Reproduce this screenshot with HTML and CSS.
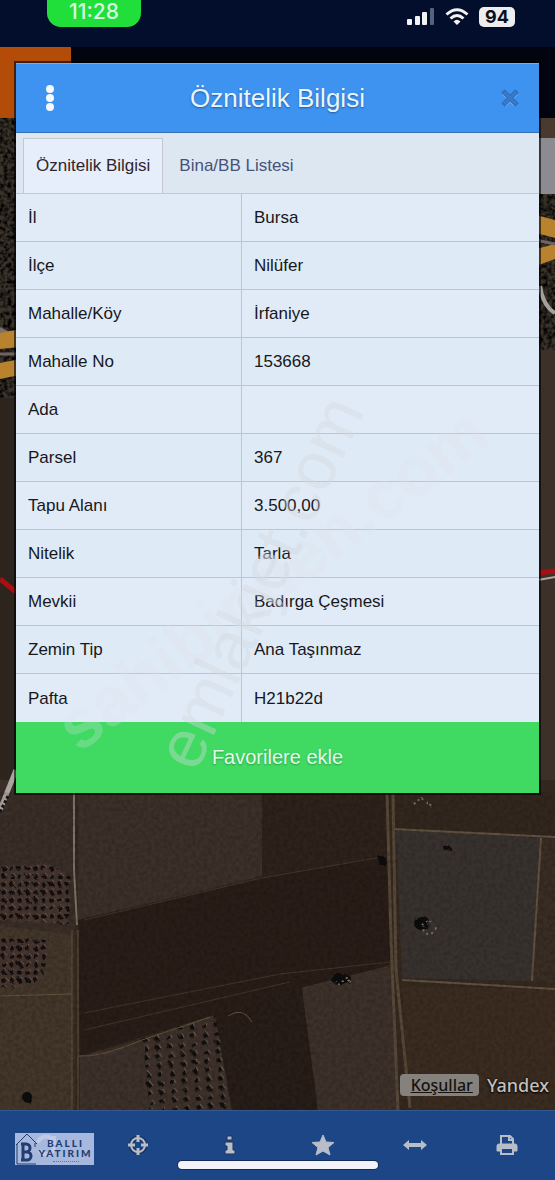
FILE: index.html
```html
<!DOCTYPE html>
<html lang="tr">
<head>
  <meta charset="UTF-8" />
  <meta name="viewport" content="width=device-width, initial-scale=1.0" />
  <title>Öznitelik Bilgisi</title>
  <link rel="stylesheet" href="styles.css">
</head>
<body>

  <header class="status-bar">
    <span class="clock">11:28</span>
    <div class="status-icons">
      <svg width="28" height="18" viewBox="0 0 28 18" fill="#f2f2f2">
        <rect x="0" y="11" width="5" height="6" rx="1" />
        <rect x="8" y="8" width="5" height="9" rx="1" />
        <rect x="15" y="4" width="5" height="13" rx="1" />
        <rect x="23" y="0" width="4" height="17" rx="1" fill="#56617a" />
      </svg>
      <svg width="24" height="18" viewBox="0 0 24 18" fill="none" stroke="#f2f2f2" stroke-width="3">
        <path d="M1.5 6.5Q12-3 22.500 6.500" />
        <path d="M5.500 10.500Q12 4.500 18.500 10.500" />
        <path d="M8.500 13.500Q12 10 15.500 13.500L12 17Z" fill="#f2f2f2" stroke="none" />
      </svg>
      <span class="battery">94</span>
    </div>
  </header>

  <div class="app-bar"><div class="app-logo"></div></div>

  <main class="map">
    <svg class="map-image" viewBox="0 118 555 992" preserveAspectRatio="xMidYMax slice">
      <defs>
        <filter id="grain" x="0" y="0" width="100%" height="100%">
          <feTurbulence type="fractalNoise" baseFrequency="0.25" numOctaves="3" seed="4" />
          <feColorMatrix values="0 0 0 0 0  0 0 0 0 0  0 0 0 0 0  2.500 0 0 0 -0.900" />
        </filter>
        <filter id="scatter">
          <feTurbulence type="fractalNoise" baseFrequency="0.15" numOctaves="2" seed="7" />
          <feDisplacementMap in="SourceGraphic" scale="6" />
        </filter>
        <pattern id="trees" width="8" height="8" patternUnits="userSpaceOnUse">
          <rect width="8" height="8" fill="#44362e" />
          <path d="M1 3L5 2L6 6L2 7Z" fill="#130f0e" />
          <path d="M5 1L7 3" stroke="#6a574c" />
        </pattern>
        <pattern id="grove" width="12" height="9" patternUnits="userSpaceOnUse" patternTransform="rotate(-5)">
          <path d="M3 3L7 2L8 6L4 7Z" fill="#0f0c0b" />
          <path d="M7 1L9 5" stroke="#75665a" />
        </pattern>
      </defs>
      <rect x="0" y="118" width="555" height="992" fill="#35291f" />

      <!-- motorway and road at the sides -->
      <rect x="0" y="118" width="555" height="280" fill="#3a332a" />
      <rect x="0" y="118" width="555" height="280" filter="url(#grain)" />
      <rect x="530" y="118" width="25" height="20" fill="#483a2e" />
      <rect x="530" y="138" width="25" height="56" fill="#8c8b91" />
      <path d="M0 327L20 337V345L0 343Z" fill="#7a7068" />
      <path d="M0 333L20 329V347L0 349ZM0 363L20 359V375L0 379Z" fill="#b9822e" />
      <path d="M0 354H20" stroke="#6f6462" stroke-width="3" />
      <path d="M536 215L555 220V238L536 233ZM536 249L555 244V259L536 266Z" fill="#b9822e" />
      <path d="M536 240L555 244" stroke="#6f6462" stroke-width="3" />
      <path d="M540 286Q543 306 555 313" stroke="#a5a19c" stroke-width="4" fill="none" />
      <rect x="0" y="398" width="20" height="400" fill="#2e241e" />
      <rect x="536" y="350" width="19" height="460" fill="#3c3129" />
      <path d="M0 579L16 592M538 573L555 571" stroke="#a80e12" stroke-width="5" />
      <path d="M538 580L555 577" stroke="#b1a5a0" stroke-width="2" />

      <!-- fields -->
      <path d="M0 780H75V1110H0Z" fill="#3a2e27" />
      <path d="M78 780H262V876L78 920Z" fill="#3c3029" />
      <path d="M262 780H390V856L262 878Z" fill="#2e221b" />
      <path d="M78 920L262 878L390 856V965L302 988L80 1056Z" fill="#291d17" />
      <path d="M80 1056L142 1040L150 1110H80Z" fill="#3d312a" />
      <path d="M142 1040L215 1015L232 1110H150Z" fill="#3e312a" />
      <path d="M215 1015L302 988L318 1110H232Z" fill="#281d17" />
      <path d="M302 988L392 967L398 1110H318Z" fill="#3d312a" />
      <path d="M393 780H555V836L393 829Z" fill="#32271e" />
      <path d="M396 829L541 838L532 981L402 978Z" fill="#38322f" />
      <path d="M541 838L555 839V984L532 981Z" fill="#392d24" />
      <path d="M402 986L555 990V1110H410Z" fill="#3b2c21" />
      <path d="M0 926L72 934V1110H0Z" fill="#43362a" />
      <g filter="url(#scatter)">
        <path d="M0 866L48 864L70 876L69 924L0 920Z" fill="url(#trees)" />
        <path d="M0 938L50 940L40 984L0 988Z" fill="url(#trees)" />
        <path d="M142 1040L215 1015L232 1110H150Z" fill="url(#grove)" />
      </g>

      <g fill="none" stroke="#62523f" stroke-width="1">
        <path d="M262 878L84 920M382 857L262 878M84 1013L280 974L390 962M84 1030L290 982M302 988L388 967" stroke="#44362c" />
        <path d="M78 1056Q100 1058 142 1040L210 1017M228 1016Q243 1006 252 1022" />
        <path d="M393 829L555 837M541 838L532 981M402 980L555 989" stroke-width="2" />
        <path d="M72 930V1110M78 930V1110M0 996L72 994" />
        <path d="M387 794L391 940L398 1110M393 794L396 970L410 1108" stroke="#574838" stroke-width="3" />
      </g>
      <path d="M74 793V870L77 925" stroke="#7d736a" stroke-width="2" fill="none" />
      <path d="M0 810L16 770" stroke="#aaa49e" stroke-width="5" />
      <path d="M0 812L8 796" stroke="#1b1715" stroke-width="3" stroke-dasharray="3 2" />
      <g filter="url(#scatter)">
        <g fill="#0c0909">
          <ellipse cx="422" cy="923" rx="8" ry="7" />
          <ellipse cx="341" cy="979" rx="10" ry="6" />
          <circle cx="382" cy="861" r="4" />
          <circle cx="447" cy="848" r="3" />
          <circle cx="27" cy="1097" r="5" />
        </g>
        <g fill="none" stroke="#807060" stroke-width="2" stroke-dasharray="2 3">
          <circle cx="429" cy="928" r="6" />
          <path d="M337 984L346 977L351 983M414 804L421 798L433 807" />
        </g>
      </g>
      <rect x="0" y="792" width="555" height="318" filter="url(#grain)" opacity="0.150" />
    </svg>

    <div class="map-copyright">
      <a href="#" class="terms">Koşullar</a>
      <span class="provider">Yandex</span>
    </div>
  </main>

  <section class="dialog" aria-labelledby="dialogTitle">
    <div class="dialog-header">
      <button class="menu-btn" aria-label="Menü">
        <svg width="10" height="26" viewBox="0 0 10 26" fill="#f4faff">
          <circle cx="5" cy="4" r="4" />
          <circle cx="5" cy="13" r="4" />
          <circle cx="5" cy="22" r="4" />
        </svg>
      </button>
      <h1 id="dialogTitle">Öznitelik Bilgisi</h1>
      <button class="close-btn" aria-label="Kapat">
        <svg width="20" height="20" viewBox="0 0 20 20" fill="none">
          <path d="M4 5L16 17M16 5L4 17" stroke="#75b3fb" stroke-width="5" />
          <path d="M3 3L17 17M17 3L3 17" stroke="#2d6fbd" stroke-width="5" />
          <path d="M4 4L16 16M16 4L4 16" stroke="#3879c8" stroke-width="3" />
        </svg>
      </button>
    </div>

    <div class="tabs">
      <button class="tab active">Öznitelik Bilgisi</button>
      <button class="tab">Bina/BB Listesi</button>
    </div>

    <table class="info-table">
      <tr><th scope="row">İl</th><td>Bursa</td></tr>
      <tr><th scope="row">İlçe</th><td>Nilüfer</td></tr>
      <tr><th scope="row">Mahalle/Köy</th><td>İrfaniye</td></tr>
      <tr><th scope="row">Mahalle No</th><td>153668</td></tr>
      <tr><th scope="row">Ada</th><td></td></tr>
      <tr><th scope="row">Parsel</th><td>367</td></tr>
      <tr><th scope="row">Tapu Alanı</th><td>3.500,00</td></tr>
      <tr><th scope="row">Nitelik</th><td>Tarla</td></tr>
      <tr><th scope="row">Mevkii</th><td>Badırga Çeşmesi</td></tr>
      <tr><th scope="row">Zemin Tip</th><td>Ana Taşınmaz</td></tr>
      <tr><th scope="row">Pafta</th><td>H21b22d</td></tr>
    </table>

    <button class="favorite-btn">Favorilere ekle</button>

    <svg class="watermark" viewBox="0 0 523 729">
      <text class="wm-sahibinden" transform="translate(63 690) rotate(-37)">sahibinden.com</text>
      <text class="wm-emlakjet" transform="translate(180 710) rotate(-65)">emlakjet.com</text>
    </svg>
  </section>

  <nav class="toolbar">
    <button aria-label="Yenile">
      <svg width="22" height="22" viewBox="0 0 22 22" fill="none" stroke="#b9bdc7" stroke-width="4">
        <path d="M3 9A8 8 0 0 1 18 7M19 2V9H12M19 13A8 8 0 0 1 4 16" />
      </svg>
    </button>
    <button aria-label="Konum">
      <svg width="22" height="22" viewBox="0 0 22 22" fill="none">
        <circle cx="11" cy="11" r="7" stroke="#183563" stroke-width="5" />
        <circle cx="11" cy="11" r="7" stroke="#b9bdc7" stroke-width="2" />
        <path d="M11 1V8M11 14V21M1 11H8M14 11H21" stroke="#b9bdc7" stroke-width="3" />
      </svg>
    </button>
    <button aria-label="Bilgi">
      <svg width="12" height="20" viewBox="0 0 12 20" fill="#b9bdc7" stroke="#183563">
        <path d="M3 1H8V5H3ZM1 7H9V15H11V19H1V15H3V11H1Z" />
      </svg>
    </button>
    <button aria-label="Favoriler">
      <svg width="24" height="22" viewBox="0 0 24 22" fill="#b9bdc7" stroke="#b9bdc7">
        <path d="M12 1L15 8L23 8.500L17 13.500L19 21L12 17L5 21L7 13.500L1 8.500L9 8Z" />
      </svg>
    </button>
    <button aria-label="Ölçüm">
      <svg width="24" height="12" viewBox="0 0 24 12" fill="#b9bdc7">
        <path d="M0 6L6 1V4H18V1L24 6L18 11V8H6V11Z" />
      </svg>
    </button>
    <button aria-label="Yazdır">
      <svg width="22" height="20" viewBox="0 0 22 20" fill="none" stroke="#b9bdc7" stroke-width="2">
        <path d="M5 9V1H14L17 4V9M13 1V5H17" />
        <path d="M1 16V11Q1 9 3 9H19Q21 9 21 11V16H17V13H5V16Z" fill="#b9bdc7" stroke-width="1" />
        <path d="M5 13V19H17V13Z" fill="#1d4686" />
      </svg>
    </button>
    <div class="agency-logo">
      <svg width="22" height="32" viewBox="0 0 22 32" fill="none" stroke="#233d70">
        <path d="M1 12L12 1L22 11M2 11V31H21M20 10V14" />
        <path d="M8 11V27H12A4 4 0 0 0 12 19H8M8 19H11A4 4 0 0 0 11 11H6M6 27H8" stroke-width="3" />
      </svg>
      <div class="agency-name">
        <span>BALLI</span>
        <span>YATIRIM</span>
        <i></i>
      </div>
    </div>
    <div class="home-indicator"></div>
  </nav>

</body>
</html>
```

FILE: styles.css
```css
* { box-sizing: border-box; }
body {
  font-family: "Liberation Sans", Arial, sans-serif;
  margin: 0;
  min-height: 100vh;
  display: flex;
  flex-direction: column;
  position: relative;
  background: #020611;
  color: #17171c;
}
button {
  font-family: inherit;
  border: none;
  background: none;
  padding: 0;
  cursor: pointer;
}
svg { display: block; }

.status-bar {
  height: 47px;
  display: flex;
  justify-content: space-between;
  align-items: flex-start;
  padding: 0 40px 0 47px;
  background: #020e2b;
}
.clock {
  width: 94px;
  height: 27px;
  border-radius: 0 0 14px 14px;
  background: #20df3b;
  color: #d8f8e0;
  font-family: Inter, sans-serif;
  font-size: 21px;
  font-weight: 500;
  line-height: 24px;
  text-align: center;
}
.status-icons {
  display: flex;
  align-items: center;
  gap: 10px;
  padding-top: 7px;
}
.battery {
  width: 36px;
  height: 20px;
  border-radius: 5px;
  background: #ededed;
  color: #0a0f1c;
  font-family: Inter, sans-serif;
  font-weight: bold;
  font-size: 18px;
  line-height: 20px;
  text-align: center;
}
.app-bar { height: 71px; background: #020510; }
.app-logo { width: 71px; height: 71px; background: #b34c08; }

/* Satellite map */
.map {
  flex: 1;
  position: relative;
  display: flex;
  align-items: flex-end;
  justify-content: flex-end;
  overflow: hidden;
}
.map-image {
  position: absolute;
  top: 0;
  left: 0;
  width: 100%;
  height: 100%;
}
.map-copyright {
  position: relative;
  display: flex;
  align-items: center;
  gap: 8px;
  padding: 0 6px 13px 0;
  font-family: "Noto Sans", sans-serif;
}
.terms {
  padding: 0 6px 0 11px;
  border-radius: 4px;
  background: #85817d;
  color: #151210;
  font-size: 16px;
  font-weight: 500;
  line-height: 22px;
}
.provider {
  color: #c4c0bd;
  font-size: 18px;
  font-weight: 500;
  line-height: 24px;
  text-shadow: 0 0 2px #000, 0 1px 2px #000;
}

/* Attribute dialog */
.dialog {
  position: absolute;
  top: 63px;
  left: 16px;
  right: 16px;
  background: #e0ebf7;
  box-shadow: 0 0 0 2px rgba(0, 0, 0, 0.6);
}
.dialog-header {
  height: 70px;
  display: flex;
  align-items: center;
  justify-content: space-between;
  padding: 0 19px 0 29px;
  background: #3e93f1;
  border-top: 1px solid #75aceb;
  border-bottom: 1px solid #3470b5;
}
.dialog-header h1 {
  margin: 0;
  color: #e9f6ff;
  font-size: 26px;
  font-weight: normal;
  text-shadow: 0 1px 2px #235b9b;
}
.tabs {
  height: 61px;
  display: flex;
  align-items: flex-end;
  padding-left: 7px;
  background: #dce7f2;
  border-bottom: 1px solid #c5c9ce;
}
.tab {
  height: 55px;
  padding: 0 15px;
  border: 1px solid transparent;
  border-bottom: none;
  color: #46527a;
  font-size: 17px;
}
.tab.active {
  padding: 0 12px;
  background: #e5eefa;
  border-color: #c5c9ce;
  color: #30252b;
}
.info-table {
  width: 100%;
  border-collapse: separate;
  border-spacing: 0;
  table-layout: fixed;
}
.info-table th,
.info-table td {
  height: 48px;
  padding: 1px 12px 0;
  border-bottom: 1px solid #c1c5ca;
  font-size: 17px;
  font-weight: normal;
  line-height: 20px;
  text-align: left;
}
.info-table th {
  width: 226px;
  border-right: 1px solid #c1c5ca;
}
.info-table tr:nth-child(even) { background: #deeaf5; }
.info-table tr:last-child th,
.info-table tr:last-child td { border-bottom: none; }
.favorite-btn {
  display: block;
  width: 100%;
  height: 71px;
  background: #40da63;
  color: #e5faeb;
  font-size: 20px;
  text-shadow: 0 1px 2px #2a9b45;
}
.watermark {
  position: absolute;
  top: 0;
  left: 0;
  width: 100%;
  height: 100%;
  pointer-events: none;
}
.wm-sahibinden {
  font-size: 68px;
  font-weight: bold;
  fill: rgba(222, 222, 234, 0.25);
}
.wm-emlakjet {
  font-size: 68px;
  fill: rgba(212, 214, 220, 0.4);
}

/* Bottom toolbar */
.toolbar {
  position: relative;
  height: 70px;
  display: grid;
  grid-template-columns: repeat(6, 1fr);
  padding: 0 2px 2px 0;
  background: #1d4686;
  border-top: 1px solid #34598f;
}
.toolbar button {
  display: flex;
  align-items: center;
  justify-content: center;
}
.home-indicator {
  position: absolute;
  left: 50%;
  bottom: 11px;
  width: 200px;
  height: 8px;
  margin-left: -100px;
  border-radius: 4px;
  background: #f3f2fa;
  box-shadow: 0 0 0 1px #102c5c;
}
.agency-logo {
  position: absolute;
  left: 15px;
  bottom: 15px;
  display: flex;
  width: 79px;
  height: 32px;
  background: rgba(190, 205, 236, 0.85);
  color: #233d70;
}
.agency-name {
  flex: 1;
  display: flex;
  flex-direction: column;
  align-items: center;
  padding-top: 5px;
  font-family: Lato, sans-serif;
  font-size: 10px;
  font-weight: 900;
  line-height: 10px;
  letter-spacing: 2px;
}
.agency-name i {
  width: 26px;
  margin-top: 3px;
  border-top: 1px dotted #6078a5;
}
```
